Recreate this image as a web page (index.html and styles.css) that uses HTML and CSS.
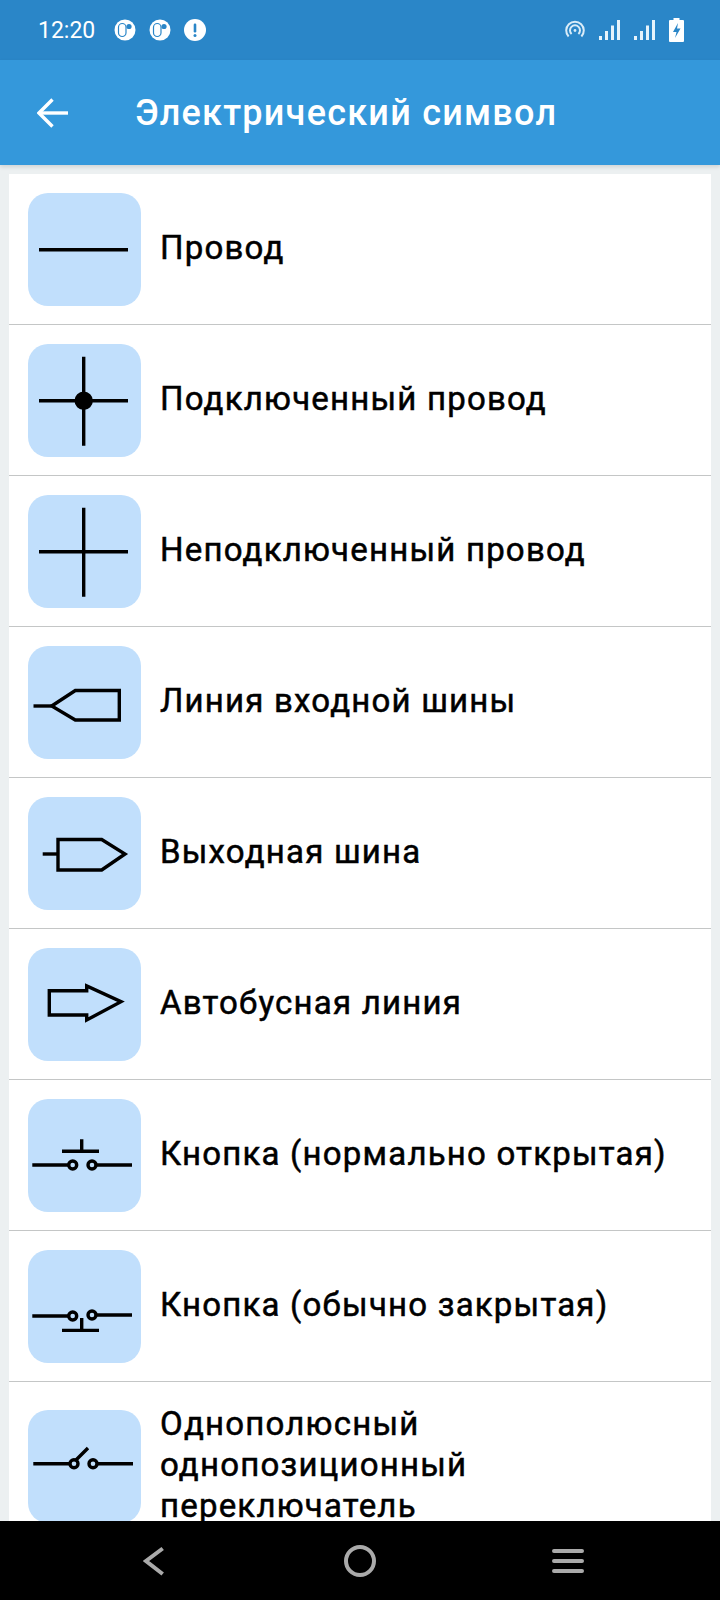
FILE: index.html
```html
<!DOCTYPE html>
<html lang="ru">
<head>
    <meta charset="UTF-8" />
    <meta name="viewport" content="width=device-width, initial-scale=1.0" />
    <title>Электрический символ</title>
    <link rel="stylesheet" href="styles.css">
</head>
<body>
    <div class="screen">
        <div class="status-bar">
            <div class="status-left">
                <span class="clock">12:20</span>
                <svg class="status-dot" viewBox="0 0 22 22"><circle cx="11" cy="11" r="10.500" fill="#fff"/><rect x="4.500" y="4.500" width="7.500" height="13" rx="3.750" fill="none" stroke="#2a86c8" stroke-width="1.200"/><circle cx="15" cy="7.500" r="2.600" fill="#2a86c8"/></svg>
                <svg class="status-dot" viewBox="0 0 22 22"><circle cx="11" cy="11" r="10.500" fill="#fff"/><rect x="4.500" y="4.500" width="7.500" height="13" rx="3.750" fill="none" stroke="#2a86c8" stroke-width="1.200"/><circle cx="15" cy="7.500" r="2.600" fill="#2a86c8"/></svg>
                <svg class="status-dot" viewBox="0 0 22 22"><circle cx="11" cy="11" r="11" fill="#fff"/><rect x="9.700" y="4.500" width="2.600" height="9" rx="1.200" fill="#2a86c8"/><circle cx="11" cy="16.500" r="1.500" fill="#2a86c8"/></svg>
            </div>
            <div class="status-right">
                <svg class="hotspot" viewBox="0 0 20 20" fill="none" stroke="#d9ecf8" stroke-width="2"><path d="M3.600 16.500a8.800 8.800 0 1 1 12.800 0"/><path d="M6.600 14a5 5 0 1 1 6.800 0"/><circle cx="10" cy="10.500" r="1.400" fill="#d9ecf8" stroke="none"/></svg>
                <svg class="signal" viewBox="0 0 22 20" fill="#e6f3fb"><rect x="0" y="16" width="3" height="4"/><rect x="6" y="11" width="3" height="9"/><rect x="12" y="5.500" width="3" height="14.500"/><rect x="18" y="0" width="3" height="20"/></svg>
                <svg class="signal" viewBox="0 0 22 20" fill="#e6f3fb"><rect x="0" y="16" width="3" height="4"/><rect x="6" y="11" width="3" height="9"/><rect x="12" y="5.500" width="3" height="14.500"/><rect x="18" y="0" width="3" height="20"/></svg>
                <svg class="battery" viewBox="0 0 15 24"><path d="M4.500 0h6v2h3.500a1 1 0 0 1 1 1v20a1 1 0 0 1-1 1h-13a1 1 0 0 1-1-1v-20a1 1 0 0 1 1-1h3.500z" fill="#fff"/><path d="M9 5 4 14h3.500l-1.500 6 5.500-9.500h-3.500z" fill="#2a86c8"/></svg>
            </div>
        </div>

        <header class="app-bar">
            <svg class="back-arrow" viewBox="0 0 32 30" fill="none" stroke="#fff" stroke-width="3.400"><path d="M31 15H3"/><path d="M15.500 1.500 2 15l13.500 13.500"/></svg>
            <h1 class="app-title">Электрический символ</h1>
        </header>

        <main class="content">
            <ul class="symbol-list">
                <li class="symbol-row">
                    <div class="symbol-icon"><svg viewBox="0 0 113 113"><path d="M11 56.700H100"/></svg></div>
                    <span class="symbol-name">Провод</span>
                </li>
                <li class="symbol-row">
                    <div class="symbol-icon"><svg viewBox="0 0 113 113"><path d="M11 56.700H100M55.700 12.700V101.700"/><circle class="filled" cx="55.700" cy="56.700" r="7.500"/></svg></div>
                    <span class="symbol-name">Подключенный провод</span>
                </li>
                <li class="symbol-row">
                    <div class="symbol-icon"><svg viewBox="0 0 113 113"><path d="M11 56.700H100M55.700 12.700V101.700"/></svg></div>
                    <span class="symbol-name">Неподключенный провод</span>
                </li>
                <li class="symbol-row">
                    <div class="symbol-icon"><svg viewBox="0 0 113 113"><path d="M5.500 60H23.700"/><path d="M23.700 60 47.300 44.500H91.300V74H47.300Z"/></svg></div>
                    <span class="symbol-name">Линия входной шины</span>
                </li>
                <li class="symbol-row">
                    <div class="symbol-icon"><svg viewBox="0 0 113 113"><path d="M14.700 57H30"/><path d="M30 42.500H73.700L97 57 73.700 73H30Z"/></svg></div>
                    <span class="symbol-name">Выходная шина</span>
                </li>
                <li class="symbol-row">
                    <div class="symbol-icon"><svg viewBox="0 0 113 113"><path d="M21.300 42.700H58.700V38L93 53.700 58.700 72V67H21.300Z"/></svg></div>
                    <span class="symbol-name">Автобусная линия</span>
                </li>
                <li class="symbol-row">
                    <div class="symbol-icon"><svg viewBox="0 0 113 113"><path d="M4.300 66H40M68.700 66H104M34 52.300H71M53.700 40.300V52.300"/><circle cx="44.700" cy="66" r="4"/><circle cx="64" cy="66" r="4"/></svg></div>
                    <span class="symbol-name">Кнопка (нормально открытая)</span>
                </li>
                <li class="symbol-row">
                    <div class="symbol-icon"><svg viewBox="0 0 113 113"><path d="M4.300 66H40M68.700 65H104M34 80.400H71M53.700 68V80.400"/><circle cx="44.700" cy="66" r="4"/><circle cx="64" cy="65" r="4"/></svg></div>
                    <span class="symbol-name">Кнопка (обычно закрытая)</span>
                </li>
                <li class="symbol-row">
                    <div class="symbol-icon"><svg viewBox="0 0 113 113"><path d="M5.300 53.700H41M69.700 53.700H105M48 50 60 38"/><circle cx="46" cy="53.700" r="4"/><circle cx="65" cy="53.700" r="4"/></svg></div>
                    <span class="symbol-name">Однополюсный однопозиционный переключатель</span>
                </li>
            </ul>
        </main>

        <nav class="nav-bar">
            <svg class="nav-back" viewBox="0 0 22 30" fill="none"><path d="M19.700 2.500 3 15l16.700 13"/></svg>
            <svg class="nav-home" viewBox="0 0 32 32" fill="none"><circle cx="16" cy="16" r="14"/></svg>
            <svg class="nav-menu" viewBox="0 0 32 24" fill="none"><path d="M2 2H30M2 12H30M2 22H30"/></svg>
        </nav>
    </div>
</body>
</html>
```

FILE: styles.css
```css
* {
    box-sizing: border-box;
}

body {
    margin: 0;
    font-family: Roboto, "Noto Sans", sans-serif;
    background-color: #ecf0f1;
}

.screen {
    display: flex;
    flex-direction: column;
    width: 720px;
    height: 1600px;
    overflow: hidden;
}

/* status bar */
.status-bar {
    display: flex;
    justify-content: space-between;
    align-items: center;
    height: 60px;
    padding: 0 36px 0 38px;
    background-color: #2a86c8;
    color: #fff;
}

.status-left, .status-right {
    display: flex;
    align-items: center;
}

.clock {
    width: 76px;
    font-size: 23px;
}

.status-dot {
    width: 22px;
    height: 22px;
    margin-right: 13px;
}

.hotspot {
    width: 20px;
    height: 20px;
    margin-right: 14px;
}

.signal {
    width: 22px;
    height: 20px;
    margin-right: 13px;
}

.battery {
    width: 15px;
    height: 24px;
}

/* app bar */
.app-bar {
    display: flex;
    align-items: center;
    height: 105px;
    padding-left: 37px;
    background-color: #3498db;
    box-shadow: 0 2px 4px rgba(0, 0, 0, 0.12);
}

.back-arrow {
    width: 32px;
    height: 30px;
    margin-right: 66px;
}

.app-title {
    margin: 0;
    color: #fff;
    font-size: 36px;
    font-weight: 500;
    letter-spacing: 1.250px;
}

/* list */
.content {
    flex: 1;
    min-height: 0;
    overflow: hidden;
    padding: 9px 9px 0;
}

.symbol-list {
    margin: 0;
    padding: 0;
    list-style: none;
    background-color: #fff;
}

.symbol-row {
    display: flex;
    align-items: center;
    padding: 19px 19px 18px;
    border-bottom: 1px solid #c4c6c6;
}

.symbol-icon {
    flex: none;
    width: 113px;
    height: 113px;
    margin-right: 19px;
    border-radius: 20px;
    background-color: #c1dffc;
}

.symbol-icon svg {
    display: block;
    width: 113px;
    height: 113px;
    fill: none;
    stroke: #000;
    stroke-width: 3.400;
}

.symbol-icon .filled {
    fill: #000;
}

.symbol-name {
    padding: 2px 0 6px;
    color: #000;
    font-size: 33px;
    font-weight: 400;
    line-height: 41px;
    letter-spacing: 1.200px;
    -webkit-text-stroke: 0.500px #000;
}

/* bottom navigation */
.nav-bar {
    flex: none;
    position: relative;
    z-index: 1;
    display: flex;
    justify-content: space-between;
    align-items: center;
    height: 79px;
    padding: 0 136px 0 143px;
    background-color: #000;
}

.nav-bar svg {
    stroke: #aaa;
    stroke-width: 4;
}

.nav-back {
    width: 22px;
    height: 30px;
    margin-right: 3px;
}

.nav-home {
    width: 32px;
    height: 32px;
}

.nav-menu {
    width: 32px;
    height: 24px;
    stroke-linecap: round;
}
```
